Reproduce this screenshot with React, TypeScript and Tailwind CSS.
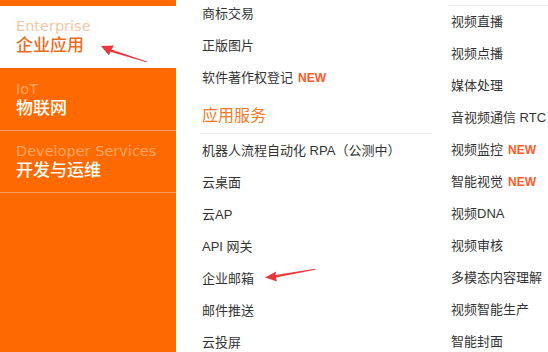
import React from "react";

const Row = ({ text, isNew }: { text: string; isNew?: boolean }) => (
  <div className="h-[32px] flex items-center whitespace-nowrap text-[13px] text-[#333]">
    <span>{text}</span>
    {isNew && (
      <span className="ml-[5px] text-[12px] font-bold text-[#ff5a2b]" style={{ fontFamily: '"Liberation Sans", Arial, sans-serif' }}>
        NEW
      </span>
    )}
  </div>
);

const SideItem = ({
  en,
  zh,
  active,
  border,
}: {
  en: string;
  zh: string;
  active?: boolean;
  border?: boolean;
}) => (
  <div
    className={
      "h-[62px] pl-[16px] pt-[11px] " +
      (active ? "bg-white" : "bg-[#ff6a00]") +
      (border ? " border-b border-[#ff9a55]" : "")
    }
  >
    <div
      className={
        "text-[14.5px] leading-[18px] " + (active ? "text-[#f3c6a6]" : "text-[#ffa566]")
      }
      style={{ fontFamily: '"DejaVu Sans", Verdana, sans-serif' }}
    >
      {en}
    </div>
    <div
      className={
        "text-[17px] leading-[22px] font-medium " + (active ? "text-[#ea6d1c]" : "text-white")
      }
    >
      {zh}
    </div>
  </div>
);

export default function App() {
  return (
    <div
      className="relative flex w-[548px] h-[352px] overflow-hidden bg-white"
      style={{ fontFamily: '"Liberation Sans", "Noto Sans CJK SC", sans-serif' }}
    >
      <div className="w-[176px] shrink-0 bg-[#ff6a00] pt-[6px]">
        <SideItem en="Enterprise" zh="企业应用" active />
        <div className="h-[1px]" />
        <SideItem en="IoT" zh="物联网" border />
        <SideItem en="Developer Services" zh="开发与运维" border />
      </div>

      <div className="ml-[24px] w-[232px] shrink-0 -mt-[2px]">
        <div className="pl-[2px]">
          <Row text="商标交易" />
          <Row text="正版图片" />
          <Row text="软件著作权登记" isNew />
        </div>
        <div className="h-[40px] pt-[10px] pl-[2px] border-b border-[#eeeeee] text-[16px] leading-[24px] text-[#f07a2a]">
          应用服务
        </div>
        <div className="pl-[2px] pt-[1px]">
          <Row text="机器人流程自动化 RPA（公测中）" />
          <Row text="云桌面" />
          <Row text="云AP" />
          <Row text="API 网关" />
          <Row text="企业邮箱" />
          <Row text="邮件推送" />
          <Row text="云投屏" />
        </div>
      </div>

      <div className="ml-[16px] flex-1 mt-[5px]">
        <div className="border-t border-[#eeeeee] pl-[3px]">
          <Row text="视频直播" />
          <Row text="视频点播" />
          <Row text="媒体处理" />
          <Row text="音视频通信 RTC" />
          <Row text="视频监控" isNew />
          <Row text="智能视觉" isNew />
          <Row text="视频DNA" />
          <Row text="视频审核" />
          <Row text="多模态内容理解" />
          <Row text="视频智能生产" />
          <Row text="智能封面" />
        </div>
      </div>

      <svg
        className="absolute left-0 top-0 pointer-events-none"
        width="548"
        height="352"
        viewBox="0 0 548 352"
      >
        <g fill="#e8383d" stroke="none">
          <polygon points="101,46 114,45.5 111.5,49.5 147,61.5 146.5,62.3 110.3,51.8 109,55.5" />
          <polygon points="265,277.5 276,271.5 275.5,275 315,268.8 315.2,269.8 276,277.6 277,281.5" />
        </g>
      </svg>
    </div>
  );
}
